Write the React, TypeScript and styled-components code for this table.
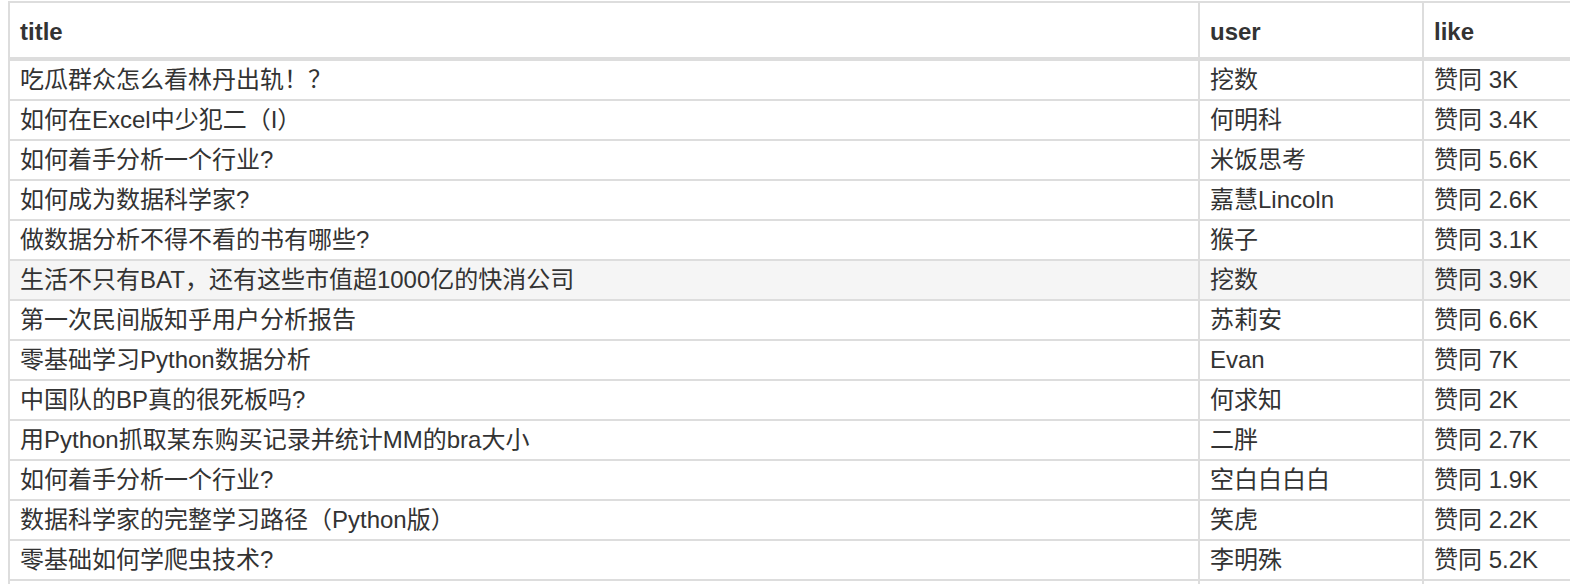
import React from "react";
import styled, { createGlobalStyle } from "styled-components";

const Global = createGlobalStyle`
  html, body { margin: 0; padding: 0; background: #fff; overflow: hidden; }
  body { font-family: "Liberation Sans", "Noto Sans CJK SC", sans-serif; color: #333; }
`;

const Page = styled.div`
  box-sizing: border-box;
  padding-left: 8px;
  padding-top: 1px;
  width: 1570px;
  height: 584px;
  overflow: hidden;
`;

const Table = styled.table`
  border-collapse: collapse;
  table-layout: fixed;
  width: 1640px;
  font-size: 24px;
`;

const HeadCell = styled.th`
  text-align: left;
  font-weight: bold;
  height: 51px;
  padding: 3px 10px 0;
  border: 2px solid #ddd;
  border-bottom-width: 4px;
  vertical-align: middle;
  line-height: 51px;
  white-space: nowrap;
`;

const Row = styled.tr<{ $active?: boolean }>`
  background: ${(p) => (p.$active ? "#f5f5f5" : "#fff")};
`;

const Cell = styled.td`
  height: 38px;
  padding: 0 10px;
  border: 2px solid #ddd;
  line-height: 38px;
  white-space: nowrap;
  overflow: hidden;
  vertical-align: middle;
`;

const rows: [string, string, string][] = [
  ["吃瓜群众怎么看林丹出轨！？", "挖数", "赞同 3K"],
  ["如何在Excel中少犯二（I）", "何明科", "赞同 3.4K"],
  ["如何着手分析一个行业?", "米饭思考", "赞同 5.6K"],
  ["如何成为数据科学家?", "嘉慧Lincoln", "赞同 2.6K"],
  ["做数据分析不得不看的书有哪些?", "猴子", "赞同 3.1K"],
  ["生活不只有BAT，还有这些市值超1000亿的快消公司", "挖数", "赞同 3.9K"],
  ["第一次民间版知乎用户分析报告", "苏莉安", "赞同 6.6K"],
  ["零基础学习Python数据分析", "Evan", "赞同 7K"],
  ["中国队的BP真的很死板吗?", "何求知", "赞同 2K"],
  ["用Python抓取某东购买记录并统计MM的bra大小", "二胖", "赞同 2.7K"],
  ["如何着手分析一个行业?", "空白白白白", "赞同 1.9K"],
  ["数据科学家的完整学习路径（Python版）", "笑虎", "赞同 2.2K"],
  ["零基础如何学爬虫技术?", "李明殊", "赞同 5.2K"],
];

export default function App() {
  return (
    <>
      <Global />
      <Page>
        <Table>
          <colgroup>
            <col style={{ width: 1190 }} />
            <col style={{ width: 224 }} />
            <col style={{ width: 226 }} />
          </colgroup>
          <thead>
            <tr>
              <HeadCell>title</HeadCell>
              <HeadCell>user</HeadCell>
              <HeadCell>like</HeadCell>
            </tr>
          </thead>
          <tbody>
            {rows.map((r, i) => (
              <Row key={i} $active={i === 5}>
                <Cell>{r[0]}</Cell>
                <Cell>{r[1]}</Cell>
                <Cell>{r[2]}</Cell>
              </Row>
            ))}
            <Row>
              <Cell />
              <Cell />
              <Cell />
            </Row>
          </tbody>
        </Table>
      </Page>
    </>
  );
}
